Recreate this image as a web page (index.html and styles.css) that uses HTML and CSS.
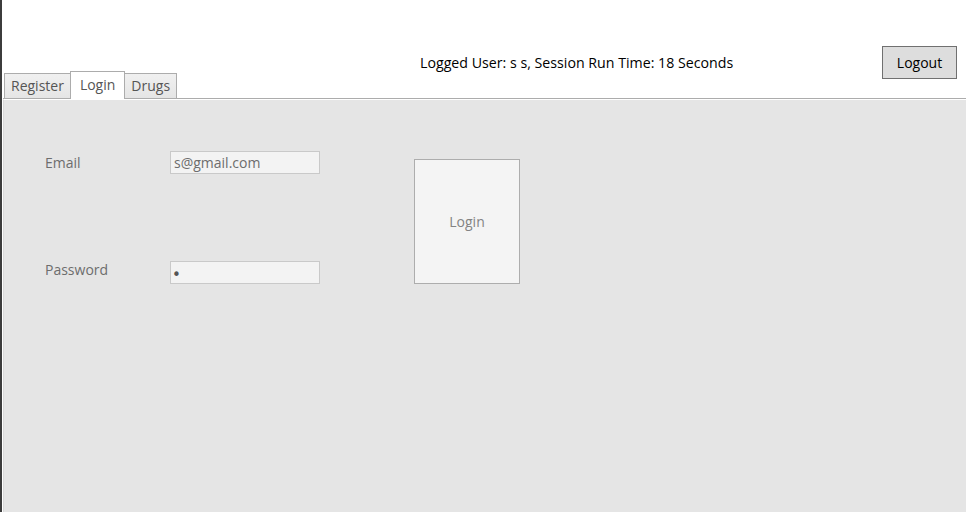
FILE: index.html
```html
<!DOCTYPE html>
<html lang="en">
<head>
    <meta charset="UTF-8">
    <title>Pharmacy</title>
    <link rel="stylesheet" href="styles.css">
</head>
<body>

<div class="window">
    <div class="header">
        <div class="status">Logged User: s s, Session Run Time: 18 Seconds</div>
        <button class="logout">Logout</button>
    </div>

    <div class="tabs">
        <div class="tab">Register</div>
        <div class="tab active">Login</div>
        <div class="tab">Drugs</div>
    </div>

    <div class="panel">
        <div class="form">
            <label class="label" for="email">Email</label>
            <input class="field" id="email" type="text" value="s@gmail.com" readonly>

            <label class="label label-pass" for="password">Password</label>
            <input class="field" id="password" type="password" value="s" readonly>
        </div>
        <button class="login-btn">Login</button>
    </div>
</div>

</body>
</html>
```

FILE: styles.css
```css
html, body {
    height: 100%;
}

body {
    margin: 0;
    background-color: #ffffff;
    font-family: "Open Sans", "Noto Sans", sans-serif;
    font-size: 14px;
    color: #000000;
    overflow: hidden;
}

.window {
    height: 100%;
    border-left: 2px solid #3c3c3c;
    padding-left: 1px;
    display: flex;
    flex-direction: column;
}

.header {
    display: flex;
    align-items: flex-start;
    height: 71px;
    box-sizing: border-box;
    padding-top: 46px;
}

.status {
    margin-left: 417px;
    margin-top: 7px;
    font-size: 14.2px;
}

.logout {
    margin-left: auto;
    margin-right: 9px;
    width: 75px;
    height: 33px;
    background-color: #dddddd;
    border: 1px solid #707070;
    font-family: "Open Sans", "Noto Sans", sans-serif;
    font-size: 14px;
    color: #000000;
    padding: 0;
    position: relative;
    z-index: 2;
}

.tabs {
    display: flex;
    align-items: flex-end;
    padding-left: 1px;
    height: 27px;
    border-bottom: 1px solid #acacac;
}

.tab {
    height: 24px;
    line-height: 24px;
    padding: 0 6px;
    background: linear-gradient(#f0f0f0, #e5e5e5);
    border: 1px solid #acacac;
    border-bottom: none;
    color: #555555;
    font-size: 14px;
}

.tab + .tab {
    margin-left: -1px;
}

.tab.active {
    height: 27px;
    line-height: 26px;
    padding: 0 9px;
    background: #ffffff;
    margin-bottom: -1px;
    position: relative;
    z-index: 1;
}

.panel {
    flex: 1;
    display: flex;
    align-items: flex-start;
    background-color: #e5e5e5;
    border-left: 1px solid #d9d9d9;
    border-top: 1px solid #ffffff;
    padding: 51px 0 0 41px;
}

.form {
    display: grid;
    grid-template-columns: 125px 150px;
    grid-template-rows: 23px 23px;
    row-gap: 87px;
    align-items: center;
}

.label {
    color: #6d6d6d;
    font-size: 14px;
}

.label-pass {
    margin-top: -6px;
}

.field {
    box-sizing: border-box;
    width: 150px;
    height: 23px;
    margin: 0;
    padding: 0 3px;
    background-color: #f3f3f3;
    border: 1px solid #c9c9c9;
    color: #6d6d6d;
    font-family: "Open Sans", "Noto Sans", sans-serif;
    font-size: 14px;
    outline: none;
}

#password {
    font-family: "DejaVu Sans", sans-serif;
    font-size: 15px;
    color: #555555;
    padding-top: 4px;
    padding-left: 1px;
}

.login-btn {
    margin-left: 94px;
    margin-top: 8px;
    width: 106px;
    height: 125px;
    background-color: #f4f4f4;
    border: 1px solid #adadad;
    color: #838383;
    font-family: "Open Sans", "Noto Sans", sans-serif;
    font-size: 14px;
    padding: 0;
}
```
